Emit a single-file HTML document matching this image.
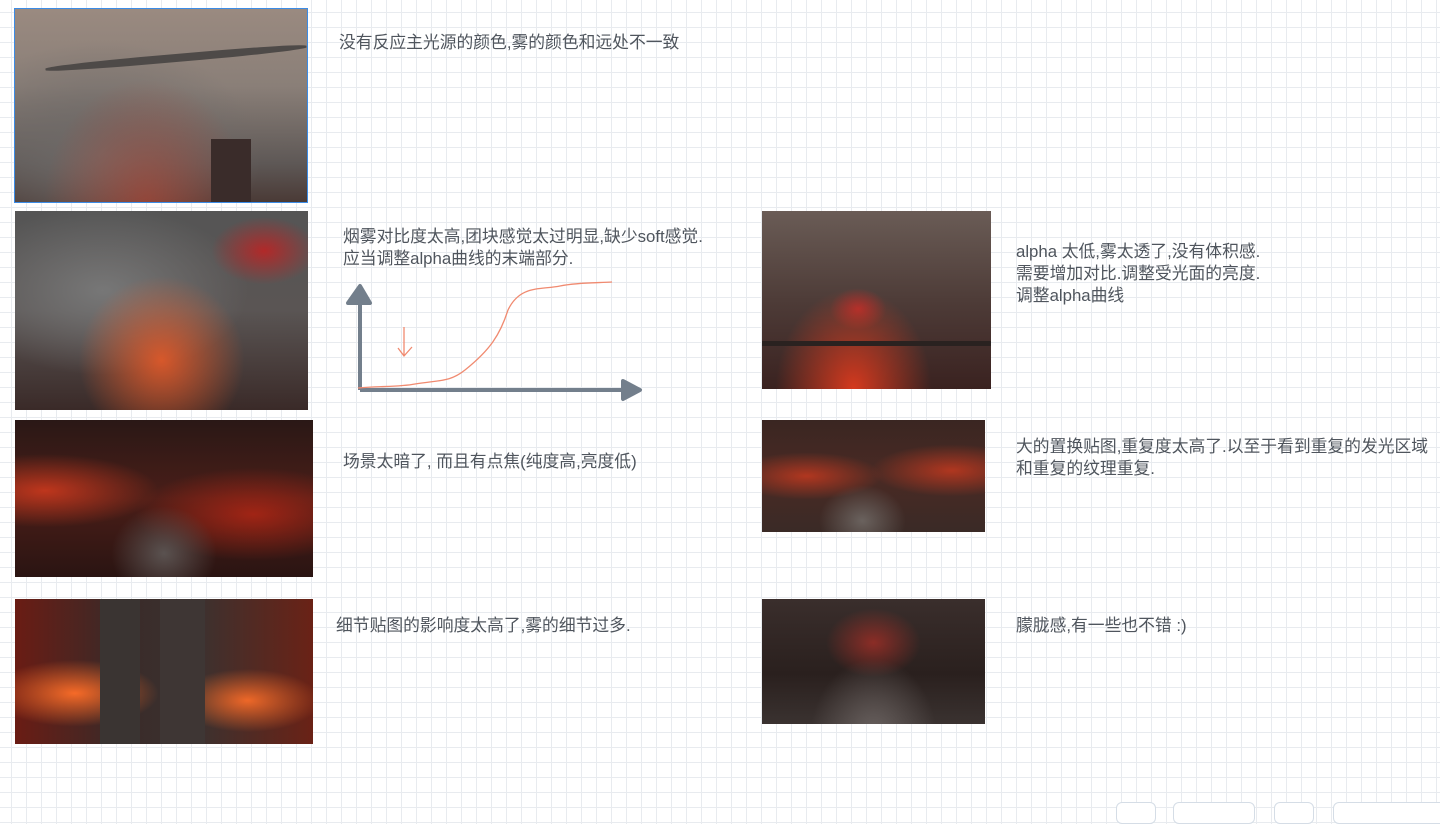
<!DOCTYPE html>
<html><head><meta charset="utf-8"><style>
html,body{margin:0;padding:0}
body{width:1440px;height:812px;overflow:hidden;position:relative;background-color:#fff;
background-image:linear-gradient(#e8ebef 1px,transparent 1px),linear-gradient(90deg,#e8ebef 1px,transparent 1px);
background-size:15px 15px;background-position:0 12px,11px 0;
font-family:"Liberation Sans","Noto Sans CJK SC",sans-serif;}
.img{position:absolute;overflow:hidden}
.t{position:absolute;font-size:16.8px;color:#4f555d;line-height:22px;white-space:nowrap}
.btn{position:absolute;top:802px;height:20px;border:1px solid #d5dde6;border-radius:6px;background:#fff}
</style></head><body>

<div class="img" style="left:14px;top:8px;width:292px;height:193px;border:1px solid #3c8ce6;background:
radial-gradient(ellipse at 45% 100%,rgba(190,60,40,.55),transparent 45%),
radial-gradient(ellipse at 30% 75%,#6e6a68,transparent 55%),
linear-gradient(#9a8a80,#8a7f78 40%,#5e5856 80%,#4a3a36)">
<div style="position:absolute;left:30px;top:45px;width:262px;height:8px;background:#4e4a48;transform:rotate(-5deg);border-radius:40%"></div>
<div style="position:absolute;left:196px;top:130px;width:40px;height:63px;background:#3a2c2a"></div>
</div>

<div class="img" style="left:15px;top:211px;width:293px;height:199px;background:
radial-gradient(ellipse at 50% 75%,rgba(230,90,40,.9),transparent 40%),
radial-gradient(ellipse at 85% 20%,rgba(200,30,30,.8),transparent 15%),
radial-gradient(ellipse at 30% 40%,#777,transparent 50%),
linear-gradient(#555,#5a5554 50%,#3a2a28)"></div>

<div class="img" style="left:15px;top:420px;width:298px;height:157px;background:
radial-gradient(ellipse at 10% 45%,rgba(220,60,30,.8),transparent 30%),
radial-gradient(ellipse at 50% 85%,#5a5250,transparent 25%),
radial-gradient(ellipse at 80% 60%,rgba(200,40,20,.7),transparent 35%),
linear-gradient(#2a1816,#4a1e18 50%,#2a1412)"></div>

<div class="img" style="left:15px;top:599px;width:298px;height:145px;background:
radial-gradient(ellipse at 20% 65%,rgba(255,110,40,.95),transparent 25%),
radial-gradient(ellipse at 78% 70%,rgba(255,110,40,.9),transparent 22%),
linear-gradient(90deg,#6a1c14,#3a2a28 35%,#3a3230 60%,#6a2216)">
<div style="position:absolute;left:85px;top:0;width:40px;height:145px;background:#3a3432"></div>
<div style="position:absolute;left:145px;top:0;width:45px;height:145px;background:#3e3634"></div>
</div>

<div class="img" style="left:762px;top:211px;width:229px;height:178px;background:
radial-gradient(ellipse at 40% 100%,rgba(230,60,30,.9),transparent 40%),
radial-gradient(ellipse at 42% 55%,rgba(210,40,40,.7),transparent 15%),
linear-gradient(#6a5c56,#4e3c38 50%,#3a2220)">
<div style="position:absolute;left:0;top:130px;width:229px;height:5px;background:#2a2220"></div>
</div>

<div class="img" style="left:762px;top:420px;width:223px;height:112px;background:
radial-gradient(ellipse at 45% 90%,#6a625e,transparent 25%),
radial-gradient(ellipse at 20% 50%,rgba(220,60,30,.7),transparent 30%),
radial-gradient(ellipse at 85% 45%,rgba(220,60,30,.7),transparent 30%),
linear-gradient(#3a2622,#4a2a24 50%,#3a2a26)"></div>

<div class="img" style="left:762px;top:599px;width:223px;height:125px;background:
radial-gradient(ellipse at 50% 110%,#6a6260,transparent 40%),
radial-gradient(ellipse at 50% 35%,rgba(200,50,40,.6),transparent 30%),
linear-gradient(#3a2e2c,#2a201e 60%,#3a3230)"></div>

<div class="t" style="left:339px;top:32px">没有反应主光源的颜色,雾的颜色和远处不一致</div>
<div class="t" style="left:343px;top:226px">烟雾对比度太高,团块感觉太过明显,缺少soft感觉.<br>应当调整alpha曲线的末端部分.</div>
<div class="t" style="left:343px;top:451px">场景太暗了, 而且有点焦(纯度高,亮度低)</div>
<div class="t" style="left:336px;top:615px">细节贴图的影响度太高了,雾的细节过多.</div>
<div class="t" style="left:1016px;top:241px">alpha 太低,雾太透了,没有体积感.<br>需要增加对比.调整受光面的亮度.<br>调整alpha曲线</div>
<div class="t" style="left:1016px;top:436px">大的置换贴图,重复度太高了.以至于看到重复的发光区域<br>和重复的纹理重复.</div>
<div class="t" style="left:1016px;top:615px">朦胧感,有一些也不错 :)</div>

<svg style="position:absolute;left:0;top:0" width="1440" height="812">
<g stroke="#737f8c" stroke-width="4" fill="#737f8c" stroke-linejoin="round">
<line x1="360" y1="300" x2="360" y2="390"/>
<line x1="360" y1="390" x2="625" y2="390"/>
<polygon points="348,303 360,286 370,303"/>
<polygon points="623,381 640,390 623,399"/>
</g>
<g stroke="#f08a70" stroke-width="1.3" fill="none">
<path d="M358 388 C380 386 400 387 415 384 C440 380 450 382 465 370 C490 350 500 335 508 310 C520 285 540 290 560 286 C580 282 600 283 612 282"/>
<path d="M404 327 L404 356 M398 348 L404 356 L412 347"/>
</g>
</svg>

<div class="btn" style="left:1116px;width:38px"></div>
<div class="btn" style="left:1173px;width:80px"></div>
<div class="btn" style="left:1274px;width:38px"></div>
<div class="btn" style="left:1333px;width:120px"></div>
</body></html>
